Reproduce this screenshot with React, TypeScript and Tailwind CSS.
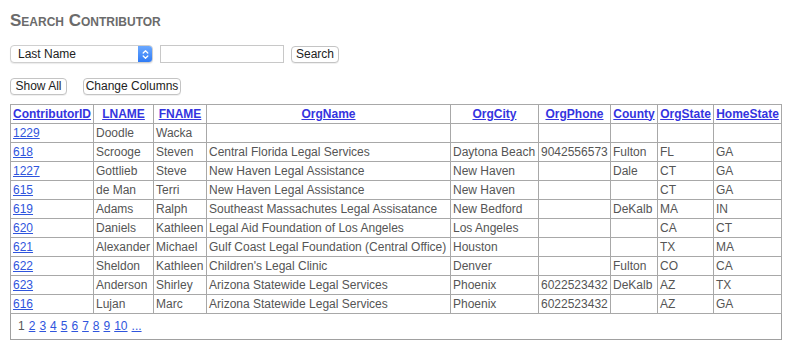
import React from 'react';

type Row = {
  id: string;
  lname: string;
  fname: string;
  org: string;
  city: string;
  phone: string;
  county: string;
  orgState: string;
  homeState: string;
};

const rows: Row[] = [
  { id: '1229', lname: 'Doodle', fname: 'Wacka', org: '', city: '', phone: '', county: '', orgState: '', homeState: '' },
  { id: '618', lname: 'Scrooge', fname: 'Steven', org: 'Central Florida Legal Services', city: 'Daytona Beach', phone: '9042556573', county: 'Fulton', orgState: 'FL', homeState: 'GA' },
  { id: '1227', lname: 'Gottlieb', fname: 'Steve', org: 'New Haven Legal Assistance', city: 'New Haven', phone: '', county: 'Dale', orgState: 'CT', homeState: 'GA' },
  { id: '615', lname: 'de Man', fname: 'Terri', org: 'New Haven Legal Assistance', city: 'New Haven', phone: '', county: '', orgState: 'CT', homeState: 'GA' },
  { id: '619', lname: 'Adams', fname: 'Ralph', org: 'Southeast Massachutes Legal Assisatance', city: 'New Bedford', phone: '', county: 'DeKalb', orgState: 'MA', homeState: 'IN' },
  { id: '620', lname: 'Daniels', fname: 'Kathleen', org: 'Legal Aid Foundation of Los Angeles', city: 'Los Angeles', phone: '', county: '', orgState: 'CA', homeState: 'CT' },
  { id: '621', lname: 'Alexander', fname: 'Michael', org: 'Gulf Coast Legal Foundation (Central Office)', city: 'Houston', phone: '', county: '', orgState: 'TX', homeState: 'MA' },
  { id: '622', lname: 'Sheldon', fname: 'Kathleen', org: "Children's Legal Clinic", city: 'Denver', phone: '', county: 'Fulton', orgState: 'CO', homeState: 'CA' },
  { id: '623', lname: 'Anderson', fname: 'Shirley', org: 'Arizona Statewide Legal Services', city: 'Phoenix', phone: '6022523432', county: 'DeKalb', orgState: 'AZ', homeState: 'TX' },
  { id: '616', lname: 'Lujan', fname: 'Marc', org: 'Arizona Statewide Legal Services', city: 'Phoenix', phone: '6022523432', county: '', orgState: 'AZ', homeState: 'GA' },
];

const columns = [
  { label: 'ContributorID', width: 83 },
  { label: 'LNAME', width: 60 },
  { label: 'FNAME', width: 53 },
  { label: 'OrgName', width: 244 },
  { label: 'OrgCity', width: 88 },
  { label: 'OrgPhone', width: 72 },
  { label: 'County', width: 47 },
  { label: 'OrgState', width: 56 },
  { label: 'HomeState', width: 68 },
];

const MacButton: React.FC<{ children: React.ReactNode; className?: string }> = ({ children, className = '' }) => (
  <button
    className={`h-[17px] whitespace-nowrap rounded-[4px] border border-[#c4c4c4] bg-white px-0 text-[12px] leading-[15px] text-[#222] shadow-[0_1px_0_rgba(0,0,0,0.06)] ${className}`}
  >
    {children}
  </button>
);

export default function App() {
  const base = 'border border-[#a8a8a8] px-[2px] h-[19px] py-0 whitespace-nowrap overflow-hidden align-middle';

  return (
    <div className="min-h-[353px] bg-white px-[10px] pt-[12px] font-['Liberation_Sans',Arial,sans-serif] text-[#555]">
      {/* Title */}
      <h1 className="text-[17px] leading-[18px] font-bold text-[#6b6b6b] [font-variant:small-caps]">
        Search Contributor
      </h1>

      {/* Search bar */}
      <div className="mt-[15px] flex items-center">
        <div className="flex h-[18px] w-[143px] items-stretch rounded-[4px] border border-[#cfcfcf] bg-white shadow-[0_1px_1px_rgba(0,0,0,0.08)]">
          <span className="flex-1 pl-[7px] text-[12px] leading-[16px] text-[#222]">Last Name</span>
          <span className="flex w-[14px] items-center justify-center rounded-r-[3px] bg-gradient-to-b from-[#6aa8ff] to-[#2f7bf5]">
            <svg width="7" height="11" viewBox="0 0 7 11" fill="none" stroke="white" strokeWidth="1.3" strokeLinecap="round" strokeLinejoin="round">
              <path d="M1.2 4 L3.5 1.8 L5.8 4" />
              <path d="M1.2 7 L3.5 9.2 L5.8 7" />
            </svg>
          </span>
        </div>
        <div className="ml-[7px] h-[18px] w-[124px] border border-[#c8c8c8] bg-white" />
        <MacButton className="ml-[7px] w-[48px]">Search</MacButton>
      </div>

      {/* Action buttons */}
      <div className="mt-[15px] flex items-center">
        <MacButton className="w-[57px]">Show All</MacButton>
        <MacButton className="ml-[16px] w-[98px]">Change Columns</MacButton>
      </div>

      {/* Results table */}
      <table className="mt-[9px] w-[772px] table-fixed border-collapse border border-[#a0a0a0] text-[12px] leading-[15px]">
        <colgroup>
          {columns.map((c) => (
            <col key={c.label} style={{ width: c.width }} />
          ))}
        </colgroup>
        <thead>
          <tr>
            {columns.map((c) => (
              <th key={c.label} className={`${base} text-center font-bold`}>
                <a href="#" className="text-[#3434e0] underline">
                  {c.label}
                </a>
              </th>
            ))}
          </tr>
        </thead>
        <tbody>
          {rows.map((r) => (
            <tr key={r.id}>
              <td className={`${base} text-left`}>
                <a href="#" className="text-[#2f55dd] underline">
                  {r.id}
                </a>
              </td>
              <td className={`${base} text-left`}>{r.lname}</td>
              <td className={`${base} text-left`}>{r.fname}</td>
              <td className={`${base} text-left`}>{r.org}</td>
              <td className={`${base} text-left`}>{r.city}</td>
              <td className={`${base} text-left`}>{r.phone}</td>
              <td className={`${base} text-left`}>{r.county}</td>
              <td className={`${base} text-left`}>{r.orgState}</td>
              <td className={`${base} text-left`}>{r.homeState}</td>
            </tr>
          ))}
          <tr>
            <td colSpan={9} className="h-[26px] border border-[#a0a0a0] px-[7px] text-[12px] text-[#555]">
              <span>1</span>
              {['2', '3', '4', '5', '6', '7', '8', '9', '10', '...'].map((p) => (
                <a key={p} href="#" className="ml-[4px] text-[#2f55dd] underline">
                  {p}
                </a>
              ))}
            </td>
          </tr>
        </tbody>
      </table>
    </div>
  );
}
